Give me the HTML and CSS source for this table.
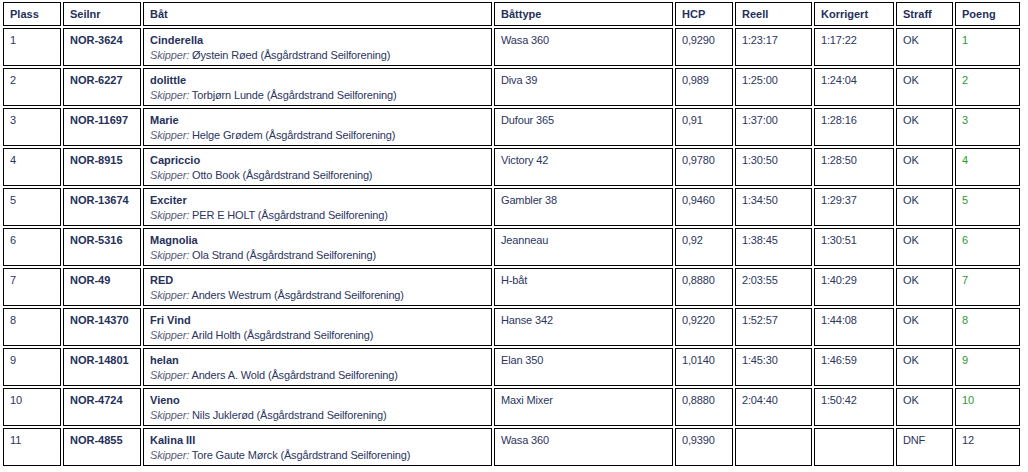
FILE: index.html
```html
<!DOCTYPE html>
<html lang="no">
<head>
<meta charset="utf-8">
<title>Resultater</title>
<link rel="stylesheet" href="styles.css">
</head>
<body>
<table class="results">
  <thead>
    <tr>
      <th class="c-plass">Plass</th>
      <th class="c-seil">Seilnr</th>
      <th class="c-bat">Båt</th>
      <th class="c-type">Båttype</th>
      <th class="c-hcp">HCP</th>
      <th class="c-reell">Reell</th>
      <th class="c-korr">Korrigert</th>
      <th class="c-straff">Straff</th>
      <th class="c-poeng">Poeng</th>
    </tr>
  </thead>
  <tbody>
    <tr><td>1</td><td class="b">NOR-3624</td><td><span class="b">Cinderella</span><br><span class="lbl">Skipper:</span> Øystein Røed (Åsgårdstrand Seilforening)</td><td>Wasa 360</td><td>0,9290</td><td>1:23:17</td><td>1:17:22</td><td>OK</td><td class="pts">1</td></tr>
    <tr><td>2</td><td class="b">NOR-6227</td><td><span class="b">dolittle</span><br><span class="lbl">Skipper:</span> Torbjørn Lunde (Åsgårdstrand Seilforening)</td><td>Diva 39</td><td>0,989</td><td>1:25:00</td><td>1:24:04</td><td>OK</td><td class="pts">2</td></tr>
    <tr><td>3</td><td class="b">NOR-11697</td><td><span class="b">Marie</span><br><span class="lbl">Skipper:</span> Helge Grødem (Åsgårdstrand Seilforening)</td><td>Dufour 365</td><td>0,91</td><td>1:37:00</td><td>1:28:16</td><td>OK</td><td class="pts">3</td></tr>
    <tr><td>4</td><td class="b">NOR-8915</td><td><span class="b">Capriccio</span><br><span class="lbl">Skipper:</span> Otto Book (Åsgårdstrand Seilforening)</td><td>Victory 42</td><td>0,9780</td><td>1:30:50</td><td>1:28:50</td><td>OK</td><td class="pts">4</td></tr>
    <tr><td>5</td><td class="b">NOR-13674</td><td><span class="b">Exciter</span><br><span class="lbl">Skipper:</span> PER E HOLT (Åsgårdstrand Seilforening)</td><td>Gambler 38</td><td>0,9460</td><td>1:34:50</td><td>1:29:37</td><td>OK</td><td class="pts">5</td></tr>
    <tr><td>6</td><td class="b">NOR-5316</td><td><span class="b">Magnolia</span><br><span class="lbl">Skipper:</span> Ola Strand (Åsgårdstrand Seilforening)</td><td>Jeanneau</td><td>0,92</td><td>1:38:45</td><td>1:30:51</td><td>OK</td><td class="pts">6</td></tr>
    <tr><td>7</td><td class="b">NOR-49</td><td><span class="b">RED</span><br><span class="lbl">Skipper:</span> Anders Westrum (Åsgårdstrand Seilforening)</td><td>H-båt</td><td>0,8880</td><td>2:03:55</td><td>1:40:29</td><td>OK</td><td class="pts">7</td></tr>
    <tr><td>8</td><td class="b">NOR-14370</td><td><span class="b">Fri Vind</span><br><span class="lbl">Skipper:</span> Arild Holth (Åsgårdstrand Seilforening)</td><td>Hanse 342</td><td>0,9220</td><td>1:52:57</td><td>1:44:08</td><td>OK</td><td class="pts">8</td></tr>
    <tr><td>9</td><td class="b">NOR-14801</td><td><span class="b">helan</span><br><span class="lbl">Skipper:</span> Anders A. Wold (Åsgårdstrand Seilforening)</td><td>Elan 350</td><td>1,0140</td><td>1:45:30</td><td>1:46:59</td><td>OK</td><td class="pts">9</td></tr>
    <tr><td>10</td><td class="b">NOR-4724</td><td><span class="b">Vieno</span><br><span class="lbl">Skipper:</span> Nils Juklerød (Åsgårdstrand Seilforening)</td><td>Maxi Mixer</td><td>0,8880</td><td>2:04:40</td><td>1:50:42</td><td>OK</td><td class="pts">10</td></tr>
    <tr><td>11</td><td class="b">NOR-4855</td><td><span class="b">Kalina III</span><br><span class="lbl">Skipper:</span> Tore Gaute Mørck (Åsgårdstrand Seilforening)</td><td>Wasa 360</td><td>0,9390</td><td></td><td></td><td>DNF</td><td>12</td></tr>
  </tbody>
</table>
</body>
</html>
```

FILE: styles.css
```css
html, body {
  margin: 0;
  padding: 0;
  background: #ffffff;
}

body {
  padding-left: 1px;
  font-family: "Liberation Sans", Arial, sans-serif;
  font-size: 11px;
  color: #2b3560;
}

.results {
  width: 1021px;
  table-layout: fixed;
  border-collapse: separate;
  border-spacing: 2px;
}

.results th,
.results td {
  box-sizing: border-box;
  border: 1px solid #000;
  text-align: left;
  vertical-align: top;
}

.results th {
  height: 24px;
  padding: 4px 6px 4px;
  line-height: 14px;
  font-weight: bold;
  color: #25305a;
  vertical-align: middle;
}

.results td {
  height: 38px;
  padding: 4px 6px 2px;
  line-height: 15px;
  letter-spacing: -0.15px;
}

.c-plass { width: 58px; }
.c-seil { width: 78px; }
.c-bat { width: 349px; }
.c-type { width: 179px; }
.c-hcp { width: 58px; }
.c-reell { width: 77px; }
.c-korr { width: 80px; }
.c-straff { width: 57px; }
.c-poeng { width: 65px; }

.results td.b,
.b {
  font-weight: bold;
  color: #25305a;
  letter-spacing: 0;
}

.lbl {
  font-style: italic;
  color: #5a5f78;
}

.pts {
  color: #2c9a2c;
}
```
